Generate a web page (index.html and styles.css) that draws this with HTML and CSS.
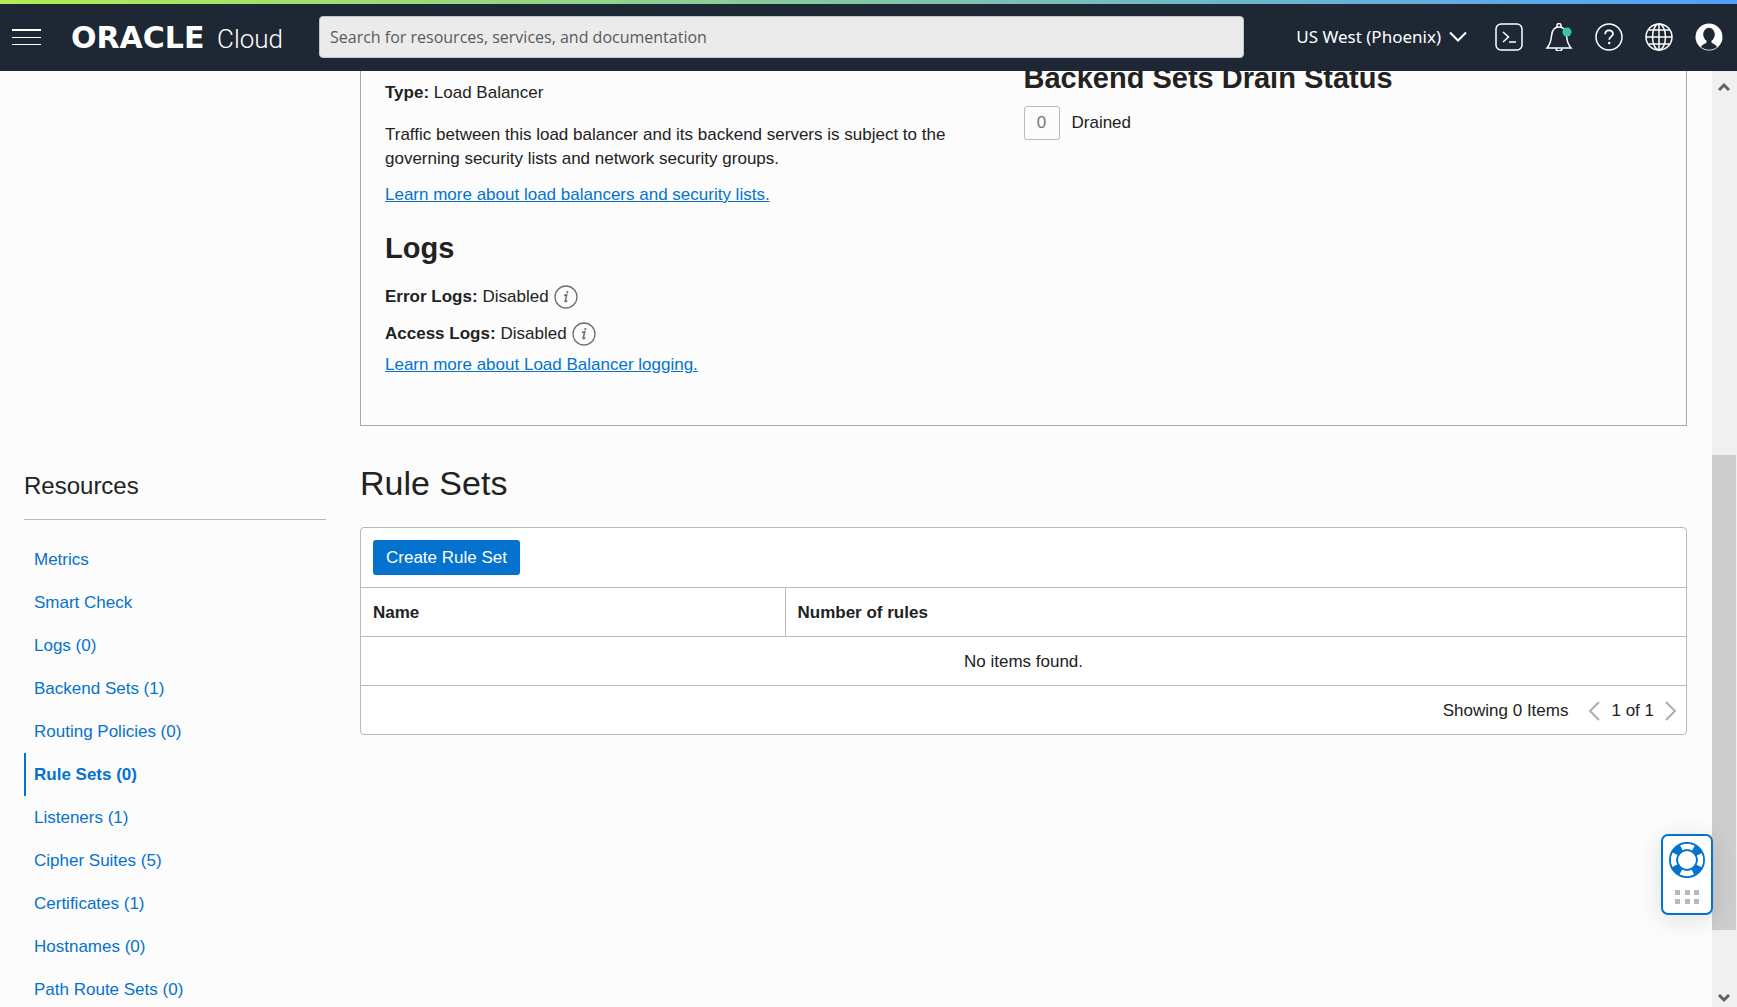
FILE: index.html
```html
<!DOCTYPE html>
<html lang="en">
<head>
  <meta charset="UTF-8" />
  <meta name="viewport" content="width=device-width, initial-scale=1.0" />
  <title>Rule Sets | Oracle Cloud</title>
  <link rel="stylesheet" href="styles.css">
</head>
<body>
  <header class="topbar">
    <button class="menu-btn" aria-label="Menu"><span></span><span></span><span></span></button>
    <a class="logo" href="#"><span class="logo-brand">ORACLE</span><span class="logo-product">Cloud</span></a>
    <input class="search" type="text" aria-label="Search" placeholder="Search for resources, services, and documentation">
    <button class="region">US West (Phoenix)
      <svg width="18" height="12" viewBox="0 0 18 12"><path d="M1 1.5l8 8 8-8" fill="none" stroke="#fff" stroke-width="2"/></svg>
    </button>
    <nav class="tools">
      <button class="icon-btn" aria-label="Cloud Shell">
        <svg width="28" height="28" viewBox="0 0 28 28" fill="none" stroke="#fff" stroke-width="1.5">
          <rect x="1" y="1" width="26" height="26" rx="5"/>
          <path d="M8 9l5.500 5-5.500 5M14 19h7"/>
        </svg>
      </button>
      <button class="icon-btn" aria-label="Announcements">
        <svg width="28" height="28" viewBox="0 0 28 28" fill="none" stroke="#fff" stroke-width="1.500">
          <path d="M2 25h24c-3.500-4-4-7-4.500-12C21 7 18 4 14 4S7 7 6.500 13C6 18 5.500 21 2 25z"/>
          <path d="M12 4V2.500a2 2 0 0 1 4 0V4M11 25.500a3 2.500 0 0 0 6 0"/>
          <circle cx="22" cy="9" r="4.500" fill="#36c9a8" stroke="none"/>
        </svg>
      </button>
      <button class="icon-btn" aria-label="Help">
        <svg width="28" height="28" viewBox="0 0 28 28" fill="none" stroke="#fff" stroke-width="1.500">
          <circle cx="14" cy="14" r="13"/>
          <path d="M10.200 11.200c0-5 7.800-5 7.800-.4 0 3-3.800 2.700-3.800 6" stroke-width="1.800"/>
          <circle cx="14.200" cy="20" r="1.200" fill="#fff" stroke="none"/>
        </svg>
      </button>
      <button class="icon-btn" aria-label="Language">
        <svg width="28" height="28" viewBox="0 0 28 28" fill="none" stroke="#fff" stroke-width="1.500">
          <circle cx="14" cy="14" r="13"/>
          <ellipse cx="14" cy="14" rx="6.500" ry="13"/>
          <path d="M14 1v26M1 14h26M3.500 7h21M3.500 21h21"/>
        </svg>
      </button>
      <button class="icon-btn" aria-label="Profile">
        <svg width="28" height="28" viewBox="0 0 28 28">
          <circle cx="14" cy="14" r="13.500" fill="#fff"/>
          <ellipse cx="14" cy="11.500" rx="5.800" ry="6.800" fill="#1e2834"/>
          <path d="M11.500 16h5v3.500c1.500 1.500 4 1.500 5.500 4.500-4.500 3.500-11.500 3.500-16 0 1.500-3 4-3 5.500-4.500z" fill="#1e2834"/>
        </svg>
      </button>
    </nav>
  </header>

  <div class="viewport">
    <main class="page">
      <section class="details">
        <div class="info">
          <p><b>Type:</b> Load Balancer</p>
          <p class="note">Traffic between this load balancer and its backend servers is subject to the governing security lists and network security groups.</p>
          <p><a href="#">Learn more about load balancers and security lists.</a></p>
          <h2>Logs</h2>
          <p class="log"><b>Error Logs:</b> Disabled
            <svg class="info-icon" width="24" height="24" viewBox="0 0 24 24"><circle cx="12" cy="12" r="11" fill="none" stroke="#6f6f6f" stroke-width="1.300"/><path d="M10 10.500l2.800-.8-1.600 6.300c-.2 1 .8.9 2-.4" fill="none" stroke="#6f6f6f" stroke-width="1.500"/><circle cx="13.300" cy="7" r="1.100" fill="#6f6f6f"/></svg>
          </p>
          <p class="log"><b>Access Logs:</b> Disabled
            <svg class="info-icon" width="24" height="24" viewBox="0 0 24 24"><circle cx="12" cy="12" r="11" fill="none" stroke="#6f6f6f" stroke-width="1.300"/><path d="M10 10.500l2.800-.8-1.600 6.300c-.2 1 .8.9 2-.4" fill="none" stroke="#6f6f6f" stroke-width="1.500"/><circle cx="13.300" cy="7" r="1.100" fill="#6f6f6f"/></svg>
          </p>
          <p><a href="#">Learn more about Load Balancer logging.</a></p>
        </div>
        <div class="drain">
          <h2>Backend Sets Drain Status</h2>
          <div class="drain-row"><span class="count">0</span> Drained</div>
        </div>
      </section>

      <aside class="resources">
        <h3>Resources</h3>
        <ul>
          <li><a href="#">Metrics</a></li>
          <li><a href="#">Smart Check</a></li>
          <li><a href="#">Logs (0)</a></li>
          <li><a href="#">Backend Sets (1)</a></li>
          <li><a href="#">Routing Policies (0)</a></li>
          <li class="active"><a href="#">Rule Sets (0)</a></li>
          <li><a href="#">Listeners (1)</a></li>
          <li><a href="#">Cipher Suites (5)</a></li>
          <li><a href="#">Certificates (1)</a></li>
          <li><a href="#">Hostnames (0)</a></li>
          <li><a href="#">Path Route Sets (0)</a></li>
        </ul>
      </aside>

      <section class="rule-sets">
        <h1>Rule Sets</h1>
        <div class="table-box">
          <div class="actions"><button class="btn">Create Rule Set</button></div>
          <table>
            <thead>
              <tr><th class="name-col">Name</th><th>Number of rules</th></tr>
            </thead>
            <tbody>
              <tr><td class="empty" colspan="2">No items found.</td></tr>
            </tbody>
          </table>
          <div class="pager">
            <span class="showing">Showing 0 Items</span>
            <button aria-label="Previous page" disabled><svg width="12" height="20" viewBox="0 0 12 20"><path d="M11 1L2 10l9 9" fill="none" stroke="#aeaeae" stroke-width="2"/></svg></button>
            <span>1 of 1</span>
            <button aria-label="Next page" disabled><svg width="12" height="20" viewBox="0 0 12 20"><path d="M1 1l9 9-9 9" fill="none" stroke="#aeaeae" stroke-width="2"/></svg></button>
          </div>
        </div>
      </section>
    </main>

    <div class="scrollbar">
      <svg width="12" height="10" viewBox="0 0 12 10"><path d="M1 8l5-5 5 5" fill="none" stroke="#606060" stroke-width="3"/></svg>
      <div class="thumb"></div>
      <svg class="down" width="12" height="10" viewBox="0 0 12 10"><path d="M1 2l5 5 5-5" fill="none" stroke="#606060" stroke-width="3"/></svg>
    </div>
  </div>

  <button class="help-widget" aria-label="Support">
    <svg width="36" height="36" viewBox="0 0 36 36" fill="none">
      <circle cx="18" cy="18" r="13.500" stroke="#0572ce" stroke-width="7"/>
      <circle cx="18" cy="18" r="13.500" stroke="#fff" stroke-width="5.500" stroke-dasharray="12.500 8.706" stroke-dashoffset="6.250"/>
      <circle cx="18" cy="18" r="17.200" stroke="#0572ce" stroke-width="1.600"/>
      <circle cx="18" cy="18" r="9.800" stroke="#0572ce" stroke-width="1.600"/>
    </svg>
    <svg width="24" height="14" viewBox="0 0 24 14" fill="#b3bac3">
      <path d="M0 0h5v5H0zM10 0h5v5h-5zM19 0h5v5h-5zM0 9h5v5H0zM10 9h5v5h-5zM19 9h5v5h-5z"/>
    </svg>
  </button>
</body>
</html>
```
FILE: styles.css
```css
* {
  box-sizing: border-box;
}
body {
  margin: 0;
  height: 100vh;
  display: flex;
  flex-direction: column;
  overflow: hidden;
  font-family: "Liberation Sans", Arial, sans-serif;
  font-size: 17px;
  line-height: 24px;
  color: #222;
  background: #fcfcfc;
}
h1, h2, h3, p, ul {
  margin: 0;
  padding: 0;
}
button {
  font: inherit;
  border: none;
  padding: 0;
  background: none;
  cursor: pointer;
}
svg {
  display: block;
}
a {
  color: #0572ce;
}

/* top bar */
.topbar {
  flex: none;
  display: flex;
  align-items: center;
  height: 71px;
  padding: 3px 14px 0 12px;
  background: linear-gradient(90deg, #b4ec51, #53a0fd) top / 100% 4px no-repeat #1e2834;
}
.menu-btn {
  display: flex;
  flex-direction: column;
  justify-content: space-between;
  width: 29px;
  height: 16px;
  margin-right: 30px;
}
.menu-btn span {
  width: 100%;
  height: 1px;
  background: #fff;
}
.menu-btn span:first-child {
  height: 2px;
}
.logo {
  display: flex;
  align-items: baseline;
  width: 248px;
  padding-top: 2px;
  color: #fff;
  text-decoration: none;
}
.logo-brand {
  width: 146px;
  font: bold 30px/32px "DejaVu Sans", sans-serif;
}
.logo-product {
  font: 300 26px/32px Roboto, sans-serif;
}
.search {
  flex: 1;
  min-width: 0;
  height: 42px;
  padding: 0 10px;
  border: 1px solid #c0c5cb;
  border-radius: 4px;
  background: #ebebeb;
  font: 16px "Open Sans", sans-serif;
  color: #333;
}
.search::placeholder {
  color: #5a5a5a;
  opacity: 1;
}
.region {
  display: flex;
  align-items: center;
  gap: 8px;
  margin: 0 28px 0 52px;
  color: #fff;
  font: 17px/24px "Noto Sans", sans-serif;
  white-space: nowrap;
}
.tools {
  display: flex;
  gap: 22px;
}

/* page */
.viewport {
  flex: 1;
  min-height: 0;
  display: flex;
}
.page {
  flex: 1;
  min-width: 0;
  overflow: hidden;
  display: grid;
  grid-template-columns: 302px 1fr;
  grid-template-rows: auto 1fr;
  column-gap: 34px;
  padding: 0 25px 0 24px;
}
.details {
  grid-column: 2;
  display: grid;
  grid-template-columns: 1fr 1fr;
  margin-top: -20px;
  padding: 0 24px 48px;
  border: 1px solid #a9a9a9;
}
.details h2 {
  font-size: 29px;
  line-height: 36px;
}
.info {
  padding: 29px 70px 0 0;
}
.info .note {
  margin: 18px 0 12px;
}
.info h2 {
  margin: 23px 0 19px;
}
.log {
  display: flex;
  align-items: center;
  gap: 5px;
  margin-bottom: 13px;
}
.log + p:not(.log) {
  margin-top: -6px;
}
.drain {
  padding-top: 8px;
}
.drain-row {
  display: flex;
  align-items: center;
  gap: 12px;
  margin-top: 10px;
}
.count {
  width: 36px;
  padding: 4px 0;
  border: 1px solid #b3bac3;
  border-radius: 3px;
  text-align: center;
  color: #777;
}

/* sidebar */
.resources {
  padding-top: 44px;
}
.resources h3 {
  padding-bottom: 17px;
  border-bottom: 1px solid #b3bac3;
  font-size: 24px;
  font-weight: normal;
  line-height: 32px;
}
.resources ul {
  margin-top: 18px;
  list-style: none;
}
.resources li {
  padding-left: 8px;
  border-left: 2px solid transparent;
  line-height: 43px;
}
.resources li a {
  text-decoration: none;
}
.resources .active {
  border-color: #0572ce;
  font-weight: bold;
}

/* rule sets */
.rule-sets {
  padding-top: 37px;
}
.rule-sets h1 {
  margin-bottom: 24px;
  font-size: 34px;
  font-weight: normal;
  line-height: 40px;
}
.table-box {
  border: 1px solid #b3bac3;
  border-radius: 4px;
  background: #fff;
}
.actions {
  padding: 12px;
}
.btn {
  display: block;
  height: 35px;
  padding: 0 13px;
  border-radius: 3px;
  background: #0572ce;
  color: #fff;
}
table {
  width: 100%;
  border-collapse: collapse;
}
th, td {
  height: 49px;
  padding: 1px 12px 0;
  border-top: 1px solid #b3bac3;
  border-bottom: 1px solid #b3bac3;
  text-align: left;
}
.name-col {
  width: 32%;
  border-right: 1px solid #b3bac3;
}
.empty {
  text-align: center;
}
.pager {
  display: flex;
  align-items: center;
  justify-content: flex-end;
  gap: 11px;
  height: 48px;
  padding: 1px 9px 0 0;
}
.showing {
  margin-right: 9px;
}

/* scrollbar */
.scrollbar {
  flex: none;
  width: 25px;
  display: grid;
  grid-template-rows: 32px 352fr 475fr 45fr 32px;
  justify-items: center;
  align-items: center;
  padding-right: 1px;
  background: #f0f0f0;
}
.thumb {
  grid-row: 3;
  width: 100%;
  height: 100%;
  background: #cdcdcd;
}
.down {
  grid-row: 5;
  align-self: end;
  margin-bottom: 4px;
}

.help-widget {
  position: fixed;
  right: 24px;
  bottom: 92px;
  display: flex;
  flex-direction: column;
  align-items: center;
  gap: 12px;
  width: 52px;
  height: 81px;
  padding-top: 6px;
  border: 2px solid #0572ce;
  border-radius: 7px;
  background: #fff;
  box-shadow: 0 4px 24px rgba(0, 0, 0, 0.12);
}
```
